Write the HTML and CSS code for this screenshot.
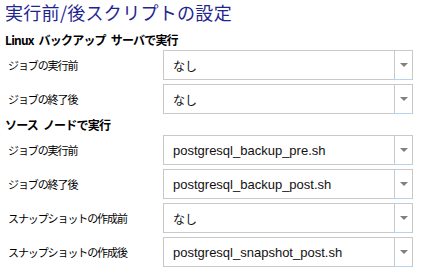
FILE: index.html
```html
<!DOCTYPE html>
<html lang="ja">
<head>
<meta charset="utf-8">
<link rel="stylesheet" href="styles.css">
</head>
<body>
<div class="page">
  <h1 class="title">実行前/後スクリプトの設定</h1>
  <h2 class="section">Linux バックアップ サーバで実行</h2>
  <div class="rows">
    <div class="row"><span class="label">ジョブの実行前</span><div class="select"><span class="value jp">なし</span><span class="arrow"></span></div></div>
    <div class="row"><span class="label">ジョブの終了後</span><div class="select"><span class="value jp">なし</span><span class="arrow"></span></div></div>
  </div>
  <h2 class="section second">ソース ノードで実行</h2>
  <div class="rows">
    <div class="row"><span class="label">ジョブの実行前</span><div class="select"><span class="value">postgresql_backup_pre.sh</span><span class="arrow"></span></div></div>
    <div class="row"><span class="label">ジョブの終了後</span><div class="select"><span class="value">postgresql_backup_post.sh</span><span class="arrow"></span></div></div>
    <div class="row"><span class="label">スナップショットの作成前</span><div class="select"><span class="value jp">なし</span><span class="arrow"></span></div></div>
    <div class="row"><span class="label">スナップショットの作成後</span><div class="select"><span class="value">postgresql_snapshot_post.sh</span><span class="arrow"></span></div></div>
  </div>
</div>
</body>
</html>
```

FILE: styles.css
```css
html, body {
  margin: 0;
  padding: 0;
  background: #ffffff;
}
body {
  font-family: "Noto Sans CJK JP", "Noto Sans", sans-serif;
  color: #000;
}
.page {
  width: 425px;
  height: 274px;
  padding: 0 0 0 5px;
  box-sizing: border-box;
  display: flex;
  flex-direction: column;
}
.title {
  margin: 0 0 6px 0;
  height: 24px;
  line-height: 24px;
  font-size: 18px;
  font-weight: normal;
  color: #1f2590;
  letter-spacing: 0.3px;
}
.section {
  margin: 0;
  height: 20px;
  line-height: 20px;
  font-size: 12px;
  font-weight: bold;
  letter-spacing: -0.8px;
  word-spacing: 3px;
}
.section.second {
  margin-top: 1px;
}
.rows {
  display: flex;
  flex-direction: column;
  gap: 4px;
}
.row {
  display: flex;
  align-items: center;
  height: 30px;
}
.label {
  width: 158px;
  padding-left: 3px;
  box-sizing: border-box;
  font-size: 11px;
  letter-spacing: -1.1px;
}
.select {
  width: 250px;
  height: 30px;
  box-sizing: border-box;
  border: 1px solid #c9c9c9;
  display: flex;
  align-items: center;
}
.value {
  flex: 1;
  padding-left: 9px;
  font-family: "Liberation Sans", Arial, sans-serif;
  font-size: 13px;
  color: #111;
}
.value.jp {
  font-family: "Noto Sans CJK JP", sans-serif;
  font-size: 12px;
}
.arrow {
  align-self: stretch;
  width: 17px;
  border-left: 1px solid #c9c9c9;
  border-bottom: 1px solid #b4d4f2;
  margin-bottom: -1px;
  display: flex;
  align-items: center;
  justify-content: center;
}
.arrow::after {
  content: "";
  width: 0;
  height: 0;
  border-left: 4px solid transparent;
  border-right: 4px solid transparent;
  border-top: 4px solid #808080;
}
```
